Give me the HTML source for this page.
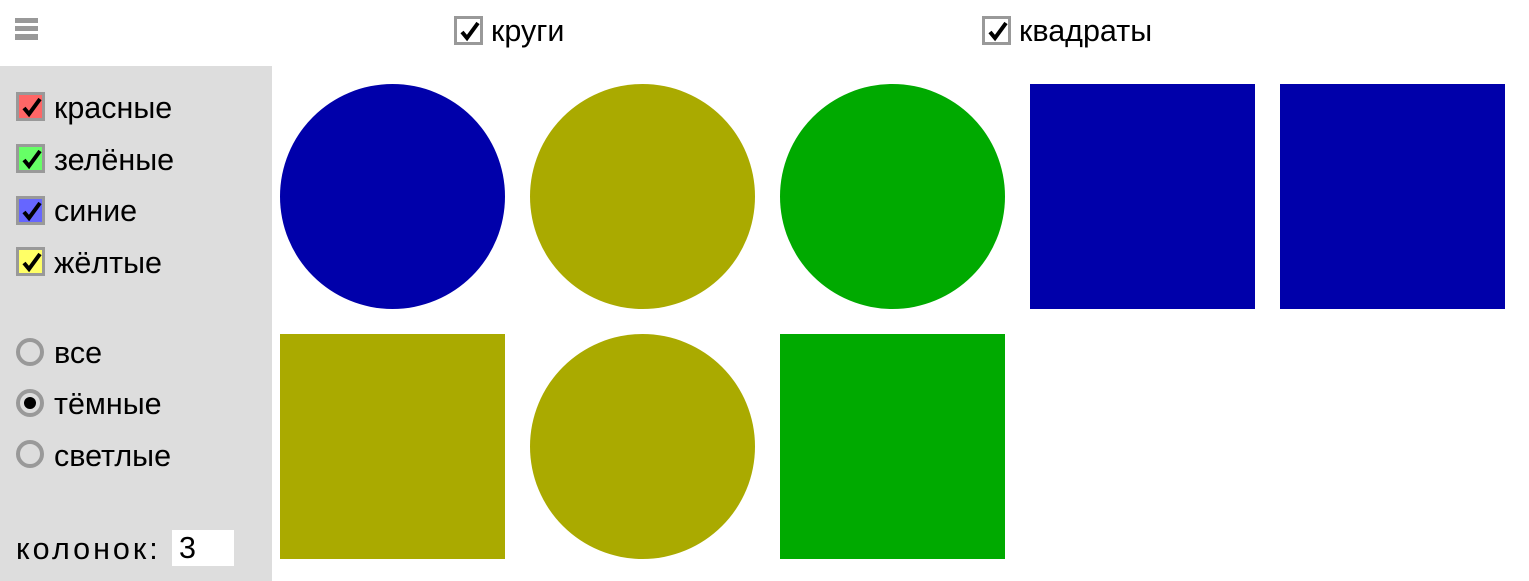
<!DOCTYPE html>
<html><head><meta charset="utf-8"><style>
body{margin:0;width:1529px;height:581px;position:relative;background:#fff;font-family:"Liberation Sans",Arial,sans-serif;overflow:hidden;color:#000}
.a{position:absolute}
.cb{position:absolute;width:23px;height:23px;border:3px solid #999;background:#fff}
.cb svg{position:absolute;left:0;top:-3px}
.t{position:absolute;font-size:30.5px;line-height:32px}
.rd{position:absolute;width:20px;height:20px;border:4px solid #999;border-radius:50%;background:#ddd;box-sizing:content-box}
.sh{position:absolute;width:225px;height:225px}
</style></head><body>
<div class="a" style="left:15px;top:18px;width:23px;height:5px;background:#999"></div>
<div class="a" style="left:15px;top:26px;width:23px;height:5px;background:#999"></div>
<div class="a" style="left:15px;top:34px;width:23px;height:6px;background:#999"></div>

<div class="cb" style="left:454px;top:16px"><svg width="26" height="28" viewBox="0 0 26 28"><path d="M5 16 L10 22 L21 7" stroke="#000" stroke-width="4" fill="none"/></svg></div>
<div class="t" style="left:491px;top:15px">круги</div>
<div class="cb" style="left:982px;top:16px"><svg width="26" height="28" viewBox="0 0 26 28"><path d="M5 16 L10 22 L21 7" stroke="#000" stroke-width="4" fill="none"/></svg></div>
<div class="t" style="left:1019px;top:15px">квадраты</div>

<div class="a" style="left:0;top:66px;width:272px;height:515px;background:#ddd"></div>
<div class="cb" style="left:16px;top:92px;background:#f66"><svg width="26" height="28" viewBox="0 0 26 28"><path d="M5 16 L10 22 L21 7" stroke="#000" stroke-width="4" fill="none"/></svg></div>
<div class="t" style="left:54px;top:92px">красные</div>
<div class="cb" style="left:16px;top:144px;background:#6f6"><svg width="26" height="28" viewBox="0 0 26 28"><path d="M5 16 L10 22 L21 7" stroke="#000" stroke-width="4" fill="none"/></svg></div>
<div class="t" style="left:54px;top:144px">зелёные</div>
<div class="cb" style="left:16px;top:196px;background:#66f"><svg width="26" height="28" viewBox="0 0 26 28"><path d="M5 16 L10 22 L21 7" stroke="#000" stroke-width="4" fill="none"/></svg></div>
<div class="t" style="left:54px;top:195px">синие</div>
<div class="cb" style="left:16px;top:247px;background:#ff6"><svg width="26" height="28" viewBox="0 0 26 28"><path d="M5 16 L10 22 L21 7" stroke="#000" stroke-width="4" fill="none"/></svg></div>
<div class="t" style="left:54px;top:247px">жёлтые</div>

<div class="rd" style="left:16px;top:338px"></div>
<div class="t" style="left:54px;top:337px">все</div>
<div class="rd" style="left:16px;top:389px"><div class="a" style="left:4px;top:4px;width:12px;height:12px;border-radius:50%;background:#000"></div></div>
<div class="t" style="left:54px;top:388px">тёмные</div>
<div class="rd" style="left:16px;top:440px"></div>
<div class="t" style="left:54px;top:440px">светлые</div>

<div class="t" style="left:16px;top:533px;letter-spacing:3px">колонок:</div>
<div class="a" style="left:172px;top:530px;width:62px;height:36px;background:#fff"></div>
<div class="t" style="left:179px;top:532px">3</div>

<div class="sh" style="left:280px;top:84px;border-radius:50%;background:#00a"></div>
<div class="sh" style="left:530px;top:84px;border-radius:50%;background:#aa0"></div>
<div class="sh" style="left:780px;top:84px;border-radius:50%;background:#0a0"></div>
<div class="sh" style="left:1030px;top:84px;background:#00a"></div>
<div class="sh" style="left:1280px;top:84px;background:#00a"></div>
<div class="sh" style="left:280px;top:334px;background:#aa0"></div>
<div class="sh" style="left:530px;top:334px;border-radius:50%;background:#aa0"></div>
<div class="sh" style="left:780px;top:334px;background:#0a0"></div>
</body></html>
